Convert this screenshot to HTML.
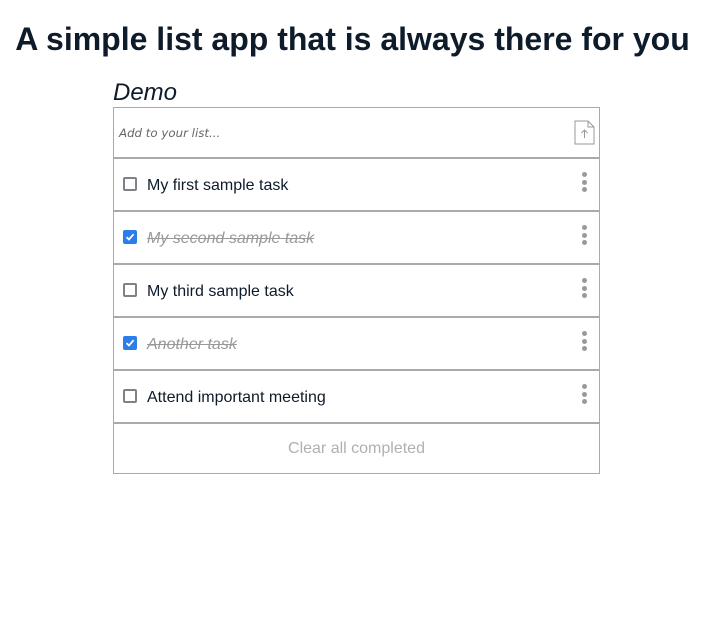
<!DOCTYPE html>
<html><head><meta charset="utf-8"><style>
*{box-sizing:border-box;margin:0;padding:0}
body{width:705px;height:634px;background:#fff;font-family:"Liberation Sans",sans-serif;color:#0d1b2a;position:relative;overflow:hidden}
h1{position:absolute;left:0;width:705px;top:21px;text-align:center;font-size:32px;font-weight:bold}
.demo{position:absolute;left:113px;top:79px;font-size:24px;font-style:italic}
.box{position:absolute;left:113px;top:107px;width:487px;border:1px solid #aaa;border-bottom:1px solid #aaa}
.inp{height:51px;border-bottom:2px solid #aaa;position:relative}
.inp span{position:absolute;left:5px;top:18px;font-style:italic;color:#666;font-family:"DejaVu Sans",sans-serif;font-size:11.8px}
.row{height:53px;border-bottom:2px solid #aaa;position:relative}
.cb{position:absolute;left:9px;top:18px;width:14px;height:14px;border:2px solid #808088;border-radius:2px}
.cb.on{background:#2b7de9;border-color:#2b7de9}
.cb.on svg{position:absolute;left:0;top:0}
.t{position:absolute;left:33px;top:18px;font-size:16px}
.t.done{color:#999;font-style:italic;text-decoration:line-through}
.dots{position:absolute;left:468px;top:13px;width:6px}
.dots i{display:block;width:5px;height:5px;border-radius:50%;background:#999;margin-bottom:2.7px}
.foot{height:49px;text-align:center;line-height:50px;color:#b0b0b0;font-size:16px}
</style></head><body>
<h1>A simple list app that is always there for you</h1>
<div class="demo">Demo</div>
<div class="box">
<div class="inp"><span>Add to your list...</span>
<svg style="position:absolute;left:460px;top:12px" width="21" height="25" viewBox="0 0 21 25"><path d="M1 1H14L20 7V24H1Z" fill="none" stroke="#999" stroke-width="1"/><path d="M14 1V7H20" fill="none" stroke="#999"/><path d="M10.5 18V10M7.5 13L10.5 10L13.5 13" fill="none" stroke="#999"/></svg></div>
<div class="row"><div class="cb"></div><div class="t">My first sample task</div><div class="dots"><i></i><i></i><i></i></div></div>
<div class="row"><div class="cb on"><svg width="10" height="10" viewBox="0 0 10 10"><path d="M1.5 5.2L4 7.5L8.6 2.2" fill="none" stroke="#fff" stroke-width="1.8"/></svg></div><div class="t done">My second sample task</div><div class="dots"><i></i><i></i><i></i></div></div>
<div class="row"><div class="cb"></div><div class="t">My third sample task</div><div class="dots"><i></i><i></i><i></i></div></div>
<div class="row"><div class="cb on"><svg width="10" height="10" viewBox="0 0 10 10"><path d="M1.5 5.2L4 7.5L8.6 2.2" fill="none" stroke="#fff" stroke-width="1.8"/></svg></div><div class="t done">Another task</div><div class="dots"><i></i><i></i><i></i></div></div>
<div class="row"><div class="cb"></div><div class="t">Attend important meeting</div><div class="dots"><i></i><i></i><i></i></div></div>
<div class="foot">Clear all completed</div>
</div>
</body></html>
